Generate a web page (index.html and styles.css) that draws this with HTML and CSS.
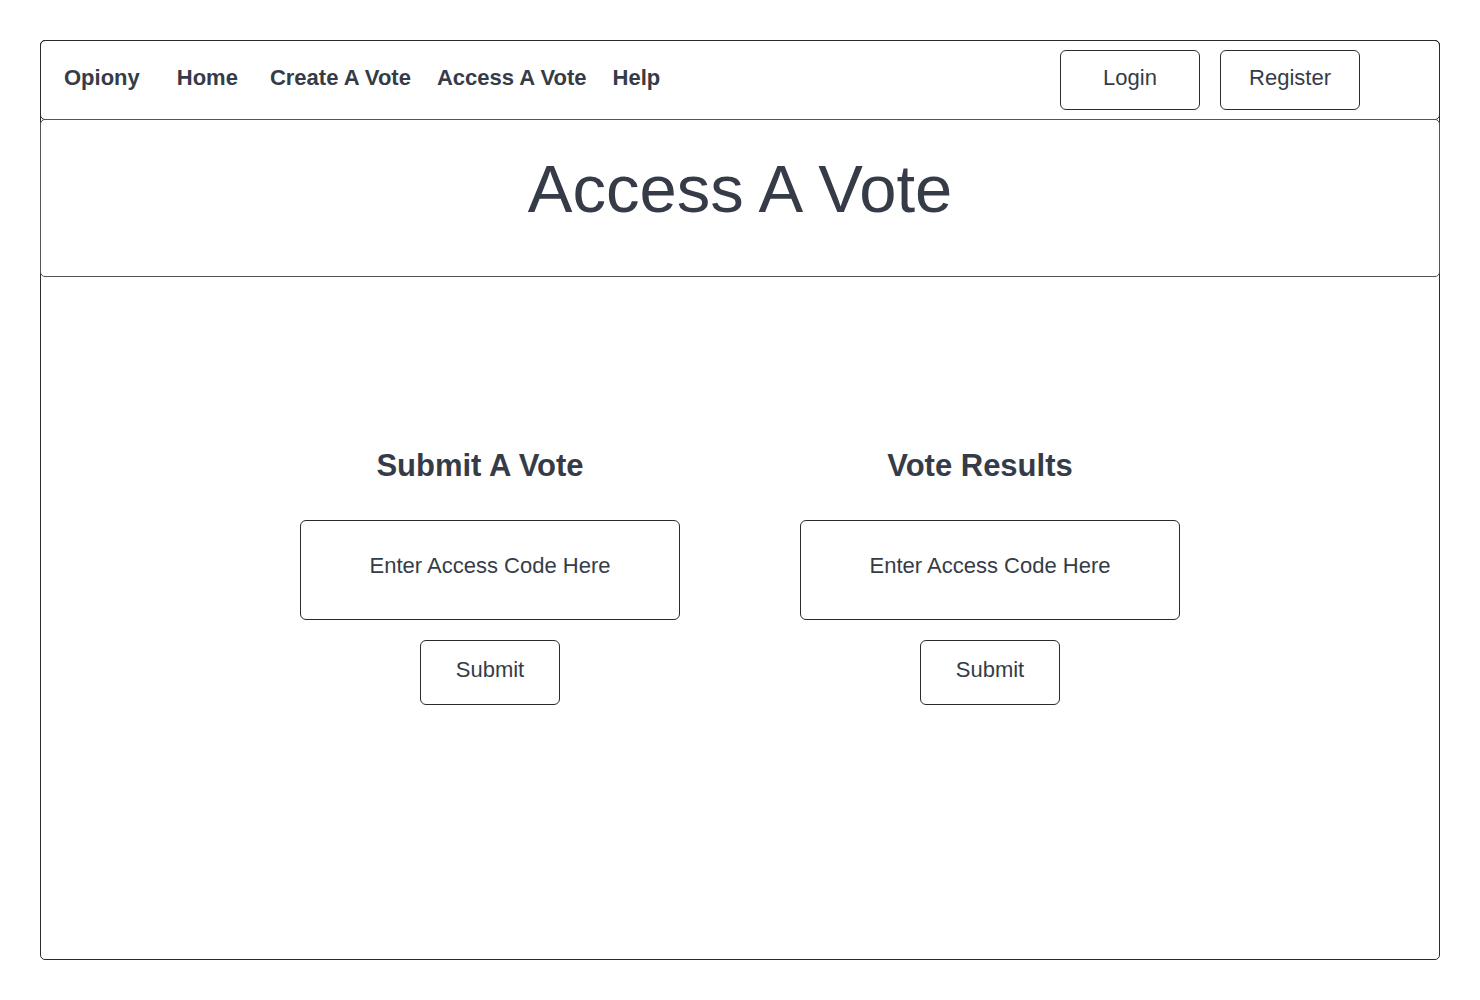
FILE: index.html
```html
<!DOCTYPE html>
<html lang="en">
<head>
<meta charset="utf-8">
<title>Opiony - Access A Vote</title>
<link rel="stylesheet" href="styles.css">
</head>
<body>
<div class="frame">
  <nav class="nav">
    <div class="links">
      <a class="brand" href="#">Opiony</a>
      <a class="link home" href="#">Home</a>
      <a class="link" href="#">Create A Vote</a>
      <a class="link" href="#">Access A Vote</a>
      <a class="link" href="#">Help</a>
    </div>
    <div class="auth">
      <button class="btn">Login</button>
      <button class="btn">Register</button>
    </div>
  </nav>
  <header class="hero">
    <h1 class="title">Access A Vote</h1>
  </header>
  <main class="content">
    <section class="col">
      <h2 class="col-title">Submit A Vote</h2>
      <div class="code-box">Enter Access Code Here</div>
      <button class="btn submit">Submit</button>
    </section>
    <section class="col">
      <h2 class="col-title">Vote Results</h2>
      <div class="code-box">Enter Access Code Here</div>
      <button class="btn submit">Submit</button>
    </section>
  </main>
</div>
</body>
</html>
```
FILE: styles.css
```css
* { box-sizing: border-box; }
html, body { margin: 0; background: #ffffff; }
body {
  padding: 40px;
  font-family: "Liberation Sans", Arial, sans-serif;
  color: #353c47;
}
.frame {
  width: 1400px;
  height: 920px;
  border: 1px solid #2b2b2b;
  border-radius: 5px;
  display: flex;
  flex-direction: column;
}
.nav {
  margin: -1px -1px 0;
  height: 80px;
  border: 1px solid #2b2b2b;
  border-radius: 5px;
  display: flex;
  align-items: center;
  justify-content: space-between;
  padding: 0 79px 0 23px;
}
.links {
  display: flex;
  align-items: center;
  gap: 26px;
  padding-bottom: 5px;
}
.links a {
  font-size: 22px;
  font-weight: bold;
  line-height: 26px;
  color: #353c47;
  text-decoration: none;
}
.brand { margin-right: 11px; }
.home { margin-right: 6px; }
.auth {
  display: flex;
  gap: 20px;
}
.btn {
  width: 140px;
  height: 60px;
  border: 1px solid #2b2b2b;
  border-radius: 6px;
  background: #ffffff;
  font-family: "Liberation Sans", Arial, sans-serif;
  font-size: 22px;
  color: #353c47;
  padding: 0 0 4px;
  cursor: pointer;
}
.hero {
  margin: -1px -1px 0;
  height: 158px;
  border: 1px solid #555555;
  border-radius: 5px;
  padding-top: 31px;
  text-align: center;
}
.title {
  margin: 0;
  font-size: 67px;
  font-weight: normal;
  line-height: 76px;
}
.content {
  display: flex;
  justify-content: center;
  gap: 120px;
  padding-top: 171px;
}
.col {
  width: 380px;
  display: flex;
  flex-direction: column;
  align-items: center;
}
.col-title {
  margin: 0 20px 36px 0;
  font-size: 31px;
  font-weight: bold;
  line-height: 36px;
}
.code-box {
  width: 380px;
  height: 100px;
  border: 1px solid #2b2b2b;
  border-radius: 6px;
  display: flex;
  align-items: center;
  justify-content: center;
  font-size: 22px;
  padding-bottom: 8px;
}
.submit {
  margin-top: 20px;
  height: 65px;
  padding-bottom: 6px;
}
```
